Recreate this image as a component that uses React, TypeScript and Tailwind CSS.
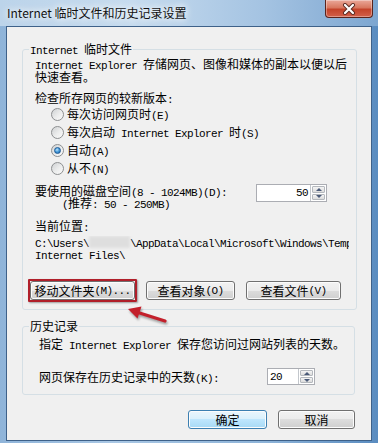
import React from 'react';

// ASCII runs get a narrow mono face so latin is half the width of CJK, like SimSun
function T({ s }: { s: string }) {
  return (
    <>
      {s.split(/([\x20-\x7e]+)/).map((p, i) =>
        i % 2 === 1 ? (
          <span
            key={i}
            className="font-['Liberation_Mono',monospace] text-[11px] tracking-[-0.6px] whitespace-pre"
          >
            {p}
          </span>
        ) : (
          p
        )
      )}
    </>
  );
}

function Radio({ label, checked }: { label: string; checked?: boolean }) {
  return (
    <div className="flex h-[18px] items-center gap-[3px] pl-[21px]">
      <span className="flex h-[13px] w-[13px] items-center justify-center rounded-full border border-[#8d8f91] bg-[linear-gradient(135deg,#cfd1d3_0%,#eceded_55%,#fbfbfb_100%)]">
        {checked && (
          <span className="h-[7px] w-[7px] rounded-full border border-[#1c5a96] bg-[radial-gradient(circle_at_40%_35%,#bfe4fb_0%,#4b9fdc_45%,#1a5fa6_100%)]" />
        )}
      </span>
      <span className="h-[14px] leading-[14px] whitespace-nowrap">
        <T s={label} />
      </span>
    </div>
  );
}

function Button({
  label,
  w,
  primary,
}: {
  label: string;
  w: string;
  primary?: boolean;
}) {
  return (
    <div
      className={[
        'flex h-[19px] items-center justify-center rounded-[3px] border leading-[14px]',
        'shadow-[inset_0_0_0_1px_#fcfcfc] whitespace-nowrap',
        primary
          ? 'border-[#3c7fb1] bg-[linear-gradient(#eaf6fd_0%,#d9f0fc_50%,#bee6fd_50%,#a7d9f5_100%)]'
          : 'border-[#707070] bg-[linear-gradient(#f2f2f2_0%,#ebebeb_50%,#dddddd_50%,#cfcfcf_100%)]',
        w,
      ].join(' ')}
    >
      <T s={label} />
    </div>
  );
}

function SpinBtns() {
  return (
    <div className="flex h-full w-[16px] flex-col gap-px border-l border-[#c3c7cc] bg-white p-px">
      <div className="flex flex-1 items-center justify-center rounded-[1px] border border-[#b4b8bd] bg-[linear-gradient(#f4f4f4,#dcdcdc)]">
        <span className="h-0 w-0 border-x-[3px] border-b-[3px] border-x-transparent border-b-[#4a5a78]" />
      </div>
      <div className="flex flex-1 items-center justify-center rounded-[1px] border border-[#b4b8bd] bg-[linear-gradient(#f4f4f4,#dcdcdc)]">
        <span className="h-0 w-0 border-x-[3px] border-t-[3px] border-x-transparent border-t-[#4a5a78]" />
      </div>
    </div>
  );
}

export default function App() {
  return (
    <div className="relative flex h-[443px] w-[378px] flex-col overflow-hidden bg-[linear-gradient(90deg,#8fb4d9_0%,#a9c7e4_30%,#8db3d8_70%,#5a8cc0_100%)] font-['Noto_Sans_CJK_SC',sans-serif] text-[12px] text-black">
      {/* title bar */}
      <div className="flex h-[26px] items-start justify-between bg-[linear-gradient(90deg,#bcd4ea_0%,#c6dbee_35%,#a4c3e2_70%,#7da6d0_100%)]">
        <div className="pl-[7px] text-[12px] leading-[26px] text-[#111] [text-shadow:0_0_6px_#fff,0_0_10px_#fff]">
          Internet 临时文件和历史记录设置
        </div>
        <div className="mr-[5px] flex h-[18px] w-[48px] items-center justify-center rounded-b-[4px] border border-t-0 border-[#5a231c] bg-[linear-gradient(#eaa899_0%,#d8775f_45%,#c4432a_55%,#d2604a_100%)] shadow-[inset_0_0_0_1px_rgba(255,255,255,0.35)]">
          <svg width="14" height="12" viewBox="0 0 14 12">
            <path d="M3 2 L11 10 M11 2 L3 10" stroke="#5a2a22" strokeWidth="4" strokeLinecap="round" />
            <path d="M3 2 L11 10 M11 2 L3 10" stroke="#fff" strokeWidth="2.2" strokeLinecap="round" />
          </svg>
        </div>
      </div>

      {/* client area */}
      <div className="mx-[6px] mb-[2px] flex-1 border border-[#3e6189] bg-[#f0f0f0] pl-[15px]">
        <fieldset className="mt-[14px] w-[333px] rounded-[3px] border border-[#d5dfe5] px-[7px] pb-[9px]">
          <legend className="-ml-[1px] h-[16px] px-[1px] leading-[16px]">
            <T s="Internet 临时文件" />
          </legend>
          <div className="pl-[5px] leading-[13px] whitespace-nowrap">
            <div className="h-[13px]">
              <T s="Internet Explorer 存储网页、图像和媒体的副本以便以后" />
            </div>
            <div className="h-[13px]">快速查看。</div>
            <div className="mt-[8px] h-[13px]">
              <T s="检查所存网页的较新版本:" />
            </div>
          </div>
          <div className="mt-[1px]">
            <Radio label="每次访问网页时(E)" />
            <Radio label="每次启动 Internet Explorer 时(S)" />
            <Radio label="自动(A)" checked />
            <Radio label="从不(N)" />
          </div>
          <div className="mt-[8px] flex items-start pl-[5px] leading-[12px]">
            <div className="w-[221px] whitespace-nowrap">
              <div className="h-[12px]">
                <T s="要使用的磁盘空间(8 - 1024MB)(D):" />
              </div>
              <div className="h-[12px] pl-[27px]">
                <T s="(推荐: 50 - 250MB)" />
              </div>
            </div>
            <div className="-mt-px flex h-[18px] w-[71px] border border-[#abadb3] bg-white">
              <div className="flex flex-1 items-center justify-end pr-[2px] leading-[14px]">
                <T s="50" />
              </div>
              <SpinBtns />
            </div>
          </div>
          <div className="mt-[10px] h-[13px] pl-[5px] leading-[13px]">
            <T s="当前位置:" />
          </div>
          <div className="mt-[4px] w-[319px] overflow-hidden pl-[5px] leading-[12px] whitespace-nowrap">
            <div className="h-[12px]">
              <T s="C:\Users\" />
              <span className="inline-block h-[12px] w-[41px] align-top bg-[#dedede] blur-[1.5px]" />
              <T s="\AppData\Local\Microsoft\Windows\Temporary" />
            </div>
            <div className="h-[12px]">
              <T s="Internet Files\" />
            </div>
          </div>
          <div className="mt-[21px] flex gap-[11px]">
            <div className="relative">
              <Button label="移动文件夹(M)..." w="w-[105px]" />
              <span className="absolute -inset-[2px] rounded-[1px] border-2 border-[#b01f2a] shadow-[1px_1px_2px_rgba(0,0,0,0.35)]" />
            </div>
            <Button label="查看对象(O)" w="w-[89px]" />
            <Button label="查看文件(V)" w="w-[95px]" />
          </div>
        </fieldset>

        <fieldset className="mt-[8px] w-[333px] rounded-[3px] border border-[#d5dfe5] px-[7px] pb-[9px]">
          <legend className="-ml-[1px] h-[16px] px-[1px] leading-[16px]">历史记录</legend>
          <div className="mt-[3px] h-[13px] pl-[9px] leading-[13px] whitespace-nowrap">
            <T s="指定 Internet Explorer 保存您访问过网站列表的天数。" />
          </div>
          <div className="mt-[18px] flex h-[17px] items-center pl-[9px]">
            <div className="h-[14px] w-[228px] leading-[14px] whitespace-nowrap">
              <T s="网页保存在历史记录中的天数(K):" />
            </div>
            <div className="flex h-[17px] w-[48px] border border-[#abadb3] bg-white">
              <div className="flex flex-1 items-center pl-[2px] leading-[14px]">
                <T s="20" />
              </div>
              <SpinBtns />
            </div>
          </div>
        </fieldset>

        <div className="mt-[15px] flex w-[333px] justify-end gap-[11px]">
          <Button label="确定" w="w-[79px]" primary />
          <Button label="取消" w="w-[77px]" />
        </div>
      </div>

      {/* red annotation arrow */}
      <svg
        className="absolute left-[120px] top-[300px] drop-shadow-[1px_2px_1px_rgba(0,0,0,0.35)]"
        width="56"
        height="28"
        viewBox="0 0 56 28"
      >
        <path d="M18 12.5 L45 21" stroke="#c3202b" strokeWidth="3.2" strokeLinecap="round" />
        <path d="M8 9 L21.5 6.5 L17.5 18.5 Z" fill="#c3202b" />
      </svg>
    </div>
  );
}
